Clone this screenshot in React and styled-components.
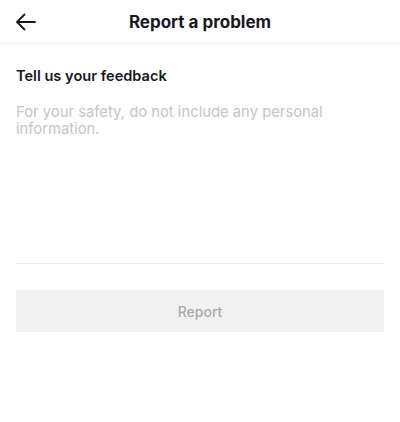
import React from "react";
import styled, { createGlobalStyle } from "styled-components";

const Global = createGlobalStyle`
  html, body { margin: 0; padding: 0; background: #fff; }
  body { font-family: Inter, "Noto Sans", sans-serif; -webkit-font-smoothing: antialiased; }
`;

const Page = styled.div`
  width: 400px;
  height: 422px;
  background: #fff;
  display: flex;
  flex-direction: column;
`;

const Header = styled.header`
  height: 44px;
  display: grid;
  grid-template-columns: 48px 1fr 48px;
  align-items: center;
  border-bottom: 1px solid #f0f0f0;
  box-sizing: border-box;
`;

const BackButton = styled.button`
  border: 0;
  background: none;
  padding: 0 0 0 15px;
  height: 44px;
  display: flex;
  align-items: center;
  color: #161823;
`;

const Title = styled.h1`
  margin: 0;
  text-align: center;
  font-size: 17px;
  font-weight: 700;
  color: #161823;
`;

const Body = styled.div`
  padding: 0 16px;
  display: flex;
  flex-direction: column;
`;

const Label = styled.div`
  margin-top: 24px;
  font-size: 14.6px;
  font-weight: 600;
  color: #161823;
  line-height: 17px;
`;

const Field = styled.textarea`
  margin-top: 19px;
  height: 159px;
  border: 0;
  border-bottom: 1px solid #ececec;
  padding: 0;
  resize: none;
  outline: none;
  font-family: inherit;
  font-size: 14.8px;
  line-height: 17px;
  color: #161823;
  &::placeholder { color: #c4c4c6; }
`;

const SubmitButton = styled.button`
  margin-top: 26px;
  height: 42px;
  border: 0;
  border-radius: 2px;
  background: #f1f1f2;
  color: #a9a9ab;
  font-family: inherit;
  font-size: 14px;
  font-weight: 500;
`;

export default function App() {
  return (
    <Page>
      <Global />
      <Header>
        <BackButton aria-label="Back">
          <svg width="21" height="18" viewBox="0 0 21 18" fill="none">
            <path d="M20 9H2M9.5 1.5L2 9l7.5 7.5" stroke="currentColor" strokeWidth="1.8" strokeLinecap="round" strokeLinejoin="round" />
          </svg>
        </BackButton>
        <Title>Report a problem</Title>
        <span />
      </Header>
      <Body>
        <Label>Tell us your feedback</Label>
        <Field placeholder="For your safety, do not include any personal information." />
        <SubmitButton disabled>Report</SubmitButton>
      </Body>
    </Page>
  );
}
